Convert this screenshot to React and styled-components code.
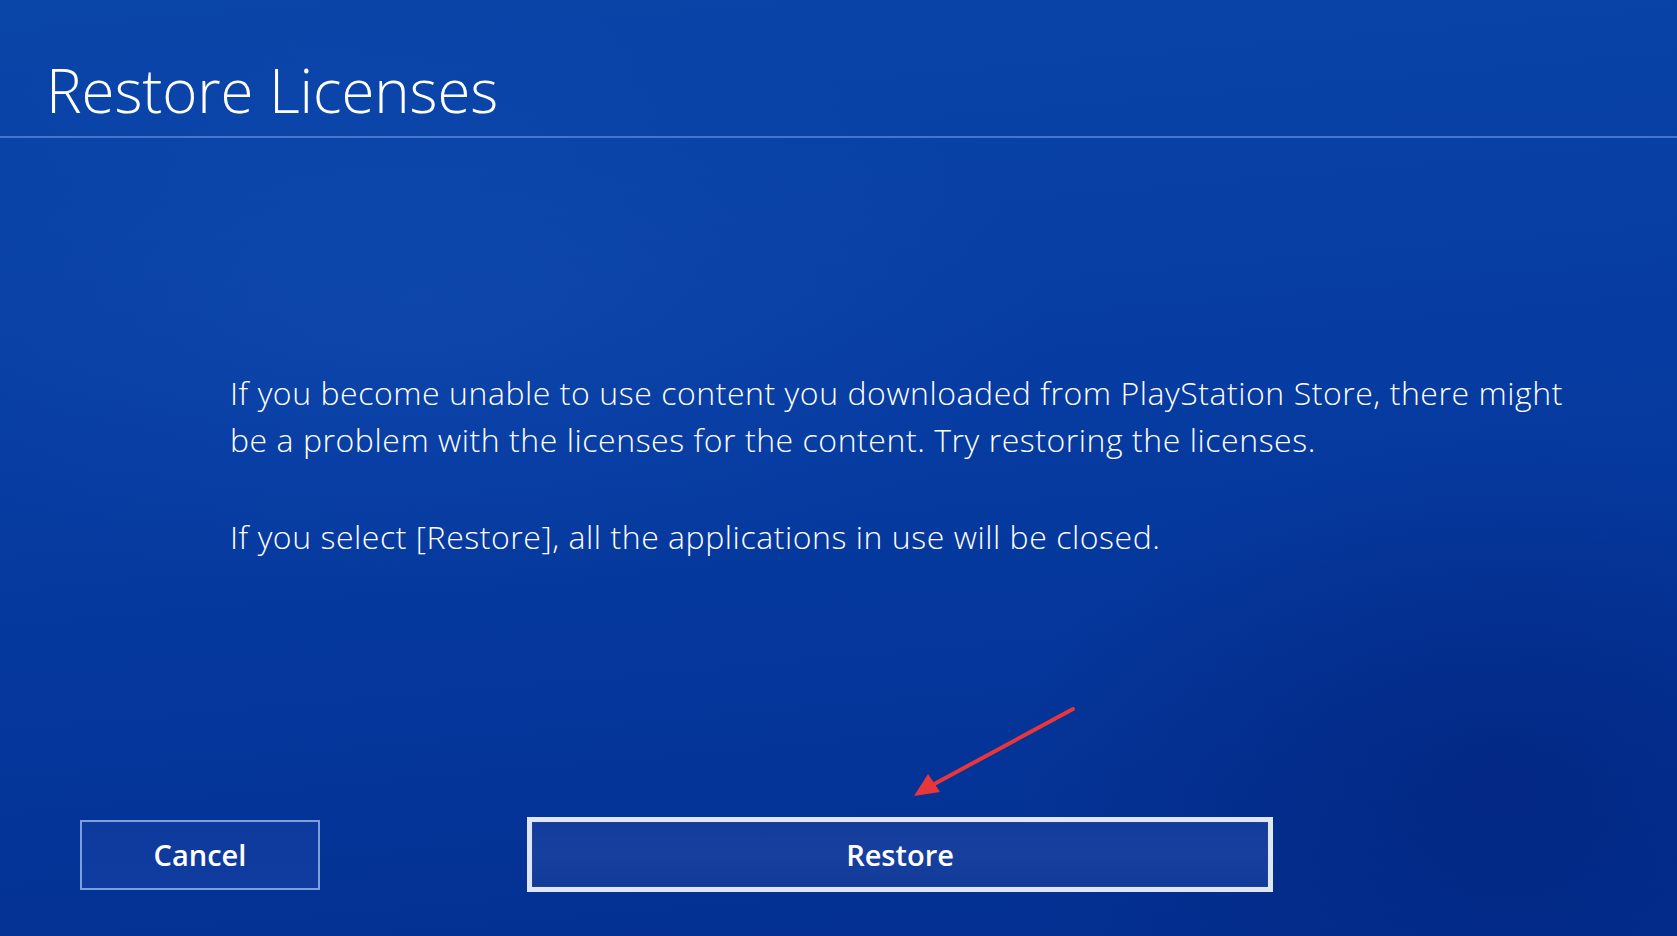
import React from 'react'
import styled, { createGlobalStyle } from 'styled-components'

const GlobalStyle = createGlobalStyle`
  html, body {
    margin: 0;
    padding: 0;
    overflow: hidden;
  }
  body {
    font-family: 'Open Sans', 'Noto Sans', 'Liberation Sans', sans-serif;
    color: #ffffff;
  }
`

const Screen = styled.div`
  position: relative;
  width: 1677px;
  height: 936px;
  overflow: hidden;
  display: flex;
  flex-direction: column;
  background:
    radial-gradient(ellipse 900px 420px at 420px 300px, rgba(40, 100, 200, 0.2), transparent 70%),
    radial-gradient(ellipse 700px 500px at 1500px 780px, rgba(0, 20, 100, 0.35), transparent 70%),
    linear-gradient(175deg, #0a45a8 0%, #073ea4 35%, #05379c 65%, #032f90 100%);
`

const Header = styled.header`
  padding: 54px 0 10px 46px;
  border-bottom: 2px solid rgba(120, 160, 225, 0.55);
`

const Title = styled.h1`
  margin: 0;
  font-size: 60px;
  line-height: 72px;
  font-weight: 300;
  letter-spacing: -0.1px;
`

const Body = styled.main`
  padding: 231px 0 0 230px;
`

const Paragraph = styled.p`
  margin: 0 0 50px;
  font-size: 32px;
  line-height: 47px;
  font-weight: 300;
  letter-spacing: 0.55px;
  white-space: nowrap;
  &:last-child {
    margin-bottom: 0;
  }
`

const ButtonRow = styled.div`
  display: flex;
  align-items: center;
  gap: 207px;
  padding-left: 80px;
  margin-top: 257px;
`

const DialogButton = styled.button`
  box-sizing: border-box;
  width: ${(p) => (p.$focused ? '746px' : '240px')};
  height: ${(p) => (p.$focused ? '75px' : '70px')};
  border: ${(p) =>
    p.$focused ? '5px solid #dfe6f3' : '2px solid rgba(150, 185, 240, 0.8)'};
  background: ${(p) =>
    p.$focused
      ? 'linear-gradient(180deg, #123c9c 0%, #173f9e 50%, #123a98 100%)'
      : 'linear-gradient(180deg, #0d3a9c 0%, #0f3c9e 100%)'};
  color: #ffffff;
  font-family: 'Open Sans', 'Noto Sans', 'Liberation Sans', sans-serif;
  font-size: 29px;
  font-weight: 600;
  padding: 0;
  cursor: pointer;
  box-shadow: ${(p) => (p.$focused ? 'inset 0 0 0 1px rgba(40, 70, 140, 0.6)' : 'none')};
`

const Pointer = styled.svg`
  position: absolute;
  left: 900px;
  top: 700px;
  width: 190px;
  height: 110px;
`

const App = () => {
  return (
    <>
      <GlobalStyle />
      <Screen>
        <Header>
          <Title>Restore Licenses</Title>
        </Header>
        <Body>
          <Paragraph>
            If you become unable to use content you downloaded from PlayStation Store, there might
            <br />
            be a problem with the licenses for the content. Try restoring the licenses.
          </Paragraph>
          <Paragraph>If you select [Restore], all the applications in use will be closed.</Paragraph>
        </Body>
        <ButtonRow>
          <DialogButton>Cancel</DialogButton>
          <DialogButton $focused>Restore</DialogButton>
        </ButtonRow>
        <Pointer viewBox="900 700 190 110">
          <line x1="1073" y1="709" x2="925" y2="789" stroke="#e8363a" strokeWidth="4" strokeLinecap="round" />
          <polygon points="914,796 928,774 940,792" fill="#e8363a" />
        </Pointer>
      </Screen>
    </>
  )
}

export default App
